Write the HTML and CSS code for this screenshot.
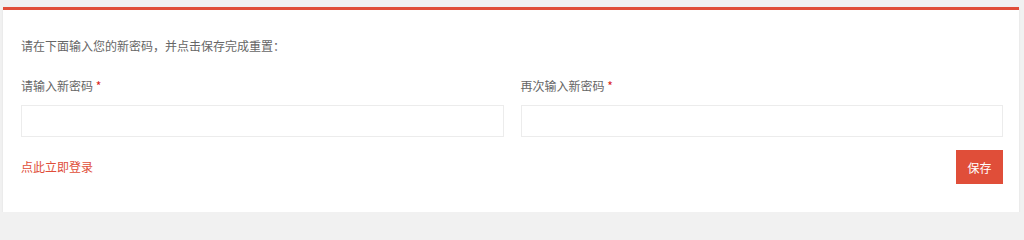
FILE: index.html
```html
<!DOCTYPE html>
<html lang="zh-CN">
<head>
<meta charset="utf-8">
<title>重置密码</title>
<link rel="stylesheet" href="styles.css">
</head>
<body>
<div class="page">
  <form class="card">
    <p class="intro">请在下面输入您的新密码，并点击保存完成重置：</p>
    <div class="fields">
      <div class="field">
        <label class="label">请输入新密码 <span class="req">*</span></label>
        <input class="input" type="password">
      </div>
      <div class="field">
        <label class="label">再次输入新密码 <span class="req">*</span></label>
        <input class="input" type="password">
      </div>
    </div>
    <div class="actions">
      <a class="login" href="#">点此立即登录</a>
      <button class="save" type="button">保存</button>
    </div>
  </form>
</div>
</body>
</html>
```
FILE: styles.css
```css
html, body {
  margin: 0;
  padding: 0;
  background: #f1f1f1;
  font-family: "Noto Sans CJK SC", "Liberation Sans", sans-serif;
  font-size: 12px;
}
.page {
  padding: 7px 5px 0 3px;
}
.card {
  background: #fff;
  border-top: 3px solid #e04e39;
  padding: 26px 16px 28px 18px;
  box-shadow: 0 1px 2px rgba(0, 0, 0, 0.08);
}
.intro {
  margin: 0;
  line-height: 20px;
  color: #666;
}
.fields {
  display: grid;
  grid-template-columns: 1fr 1fr;
  column-gap: 17px;
  margin-top: 20px;
}
.field {
  display: flex;
  flex-direction: column;
}
.label {
  line-height: 20px;
  color: #666;
}
.req {
  color: #d9251a;
}
.input {
  margin-top: 9px;
  height: 32px;
  box-sizing: border-box;
  border: 1px solid #ececec;
  background: #fff;
  padding: 0 8px;
  outline: none;
}
.actions {
  display: flex;
  justify-content: space-between;
  align-items: center;
  margin-top: 13px;
}
.login {
  color: #e04e39;
  text-decoration: none;
  line-height: 20px;
}
.save {
  width: 47px;
  height: 34px;
  border: 0;
  border-radius: 0;
  background: #e04e39;
  color: #fff;
  font-family: inherit;
  font-size: 12px;
  padding: 0;
}
```
